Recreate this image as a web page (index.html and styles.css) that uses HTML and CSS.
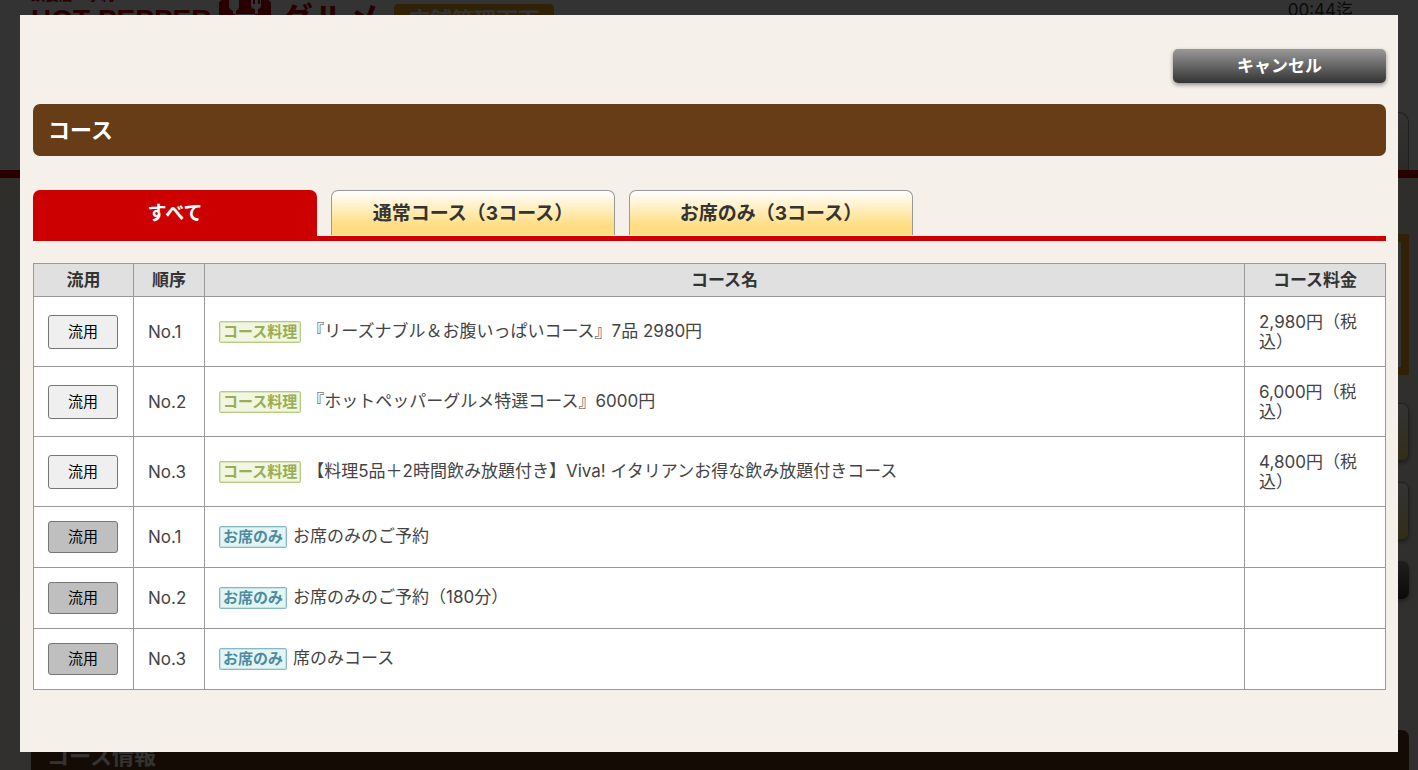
FILE: index.html
```html
<!DOCTYPE html>
<html lang="ja">
<head>
  <meta charset="UTF-8" />
  <title>コース</title>
  <link rel="stylesheet" href="styles.css">
</head>
<body>
  <div class="page" aria-hidden="true">
    <header class="page-header">
      <div>
        <div class="catch">飲食店・予約</div>
        <div class="brand">
          <span class="brand-en">HOT PEPPER</span>
          <svg class="brand-icon" width="52" height="44" viewBox="0 0 52 44">
            <rect width="52" height="44" rx="4" fill="#cc0000"/>
            <path d="M10 0v6c0 3 2 4 4 5v3h3v-3c2-1 3-3 3-5V0z" fill="#fff"/>
            <path d="M32 0v5c0 3 2 4 4 4v5h3V9c2 0 3-2 3-4V0h-1v4h-2V0h-3v4h-2V0z" fill="#fff"/>
            <path d="M16 14h20v2H16z" fill="#fff"/>
          </svg>
          <span class="brand-ja">グルメ</span>
          <span class="brand-badge">店舗管理画面</span>
        </div>
      </div>
      <div class="limit">00:44迄</div>
    </header>
    <div class="page-nav"><div class="page-tab"></div></div>
    <div class="page-main">
      <div class="notice"></div>
      <div class="page-btn"></div>
      <div class="page-btn"></div>
      <div class="page-btn dark"></div>
      <h2 class="page-title">コース情報</h2>
    </div>
  </div>

  <div class="overlay">
    <div class="modal" role="dialog" aria-labelledby="modal-title">
      <div class="modal-top">
        <button type="button" class="cancel">キャンセル</button>
      </div>
      <h1 class="title" id="modal-title">コース</h1>

      <div class="tabs" role="tablist">
        <button type="button" class="tab active" role="tab" aria-selected="true">すべて</button>
        <button type="button" class="tab" role="tab" aria-selected="false">通常コース（3コース）</button>
        <button type="button" class="tab" role="tab" aria-selected="false">お席のみ（3コース）</button>
      </div>

      <table class="courses">
        <thead>
          <tr>
            <th class="col-use">流用</th>
            <th class="col-no">順序</th>
            <th>コース名</th>
            <th class="col-price">コース料金</th>
          </tr>
        </thead>
        <tbody>
          <tr class="meal">
            <td><button type="button" class="use">流用</button></td>
            <td>No.1</td>
            <td><span class="label green">コース料理</span>『リーズナブル＆お腹いっぱいコース』7品 2980円</td>
            <td>2,980円（税込）</td>
          </tr>
          <tr class="meal">
            <td><button type="button" class="use">流用</button></td>
            <td>No.2</td>
            <td><span class="label green">コース料理</span>『ホットペッパーグルメ特選コース』6000円</td>
            <td>6,000円（税込）</td>
          </tr>
          <tr class="meal">
            <td><button type="button" class="use">流用</button></td>
            <td>No.3</td>
            <td><span class="label green">コース料理</span>【料理5品＋2時間飲み放題付き】Viva! イタリアンお得な飲み放題付きコース</td>
            <td>4,800円（税込）</td>
          </tr>
          <tr>
            <td><button type="button" class="use off" disabled>流用</button></td>
            <td>No.1</td>
            <td><span class="label blue">お席のみ</span>お席のみのご予約</td>
            <td></td>
          </tr>
          <tr>
            <td><button type="button" class="use off" disabled>流用</button></td>
            <td>No.2</td>
            <td><span class="label blue">お席のみ</span>お席のみのご予約（180分）</td>
            <td></td>
          </tr>
          <tr>
            <td><button type="button" class="use off" disabled>流用</button></td>
            <td>No.3</td>
            <td><span class="label blue">お席のみ</span>席のみコース</td>
            <td></td>
          </tr>
        </tbody>
      </table>
    </div>
  </div>
</body>
</html>
```
FILE: styles.css
```css
* {
  box-sizing: border-box;
}

body {
  margin: 0;
  height: 100vh;
  overflow: hidden;
  font-family: Inter, "Noto Sans CJK JP", sans-serif;
  font-size: 17px;
  line-height: 20px;
  color: #333;
  background-color: #fff;
}

button {
  font-family: inherit;
  padding: 0 0 3px;
}

/* page behind the modal */
.page {
  margin-top: -16px;
}

.page-header {
  display: flex;
  justify-content: space-between;
  height: 128px;
  padding: 0 65px 0 31px;
}

.catch {
  height: 16px;
  font-size: 14px;
  font-weight: bold;
  line-height: 22px;
  color: #cc0000;
}

.brand {
  display: flex;
  align-items: flex-start;
  color: #cc0000;
  font-weight: bold;
}

.brand-en {
  width: 188px;
  padding-top: 4px;
  font-family: "Liberation Sans", Arial, sans-serif;
  font-size: 28px;
  line-height: 32px;
  white-space: nowrap;
}

.brand-ja {
  width: 123px;
  padding: 4px 0 0 8px;
  font-size: 34px;
  line-height: 32px;
}

.brand-badge {
  margin-top: 4px;
  padding: 0 14px;
  border-radius: 4px;
  background-color: #f5a623;
  color: #fff;
  font-size: 22px;
  line-height: 32px;
}

.limit {
  padding-top: 16px;
}

.page-nav {
  display: flex;
  justify-content: flex-end;
  padding-right: 9px;
  border-bottom: 8px solid #cc0000;
}

.page-tab {
  width: 284px;
  height: 58px;
  border: 1px solid #999;
  border-bottom: none;
  border-radius: 10px 10px 0 0;
  background: linear-gradient(#fff, #ddd5c4);
}

.page-main {
  padding: 56px 9px 0 31px;
  background: linear-gradient(#e8e4d8, #f5f0e9);
}

.notice {
  height: 141px;
  margin-bottom: 28px;
  border: 8px solid #f5a623;
  background-color: #fff;
}

.page-btn {
  width: 284px;
  height: 58px;
  margin: 0 0 21px auto;
  border: 1px solid #999;
  border-radius: 7px;
  background: linear-gradient(#fff, #ffdd80);
  box-shadow: 0 2px 4px #888;
}

.page-btn.dark {
  height: 38px;
  margin-bottom: 131px;
  border: none;
  background: linear-gradient(#999, #333);
}

.page-title {
  margin: 0;
  padding: 0 16px;
  border-radius: 7px;
  background-color: #663d17;
  color: #fff;
  font-size: 22px;
  line-height: 52px;
}

/* modal */
.overlay {
  position: fixed;
  inset: 0;
  padding: 15px 20px;
  background-color: rgba(0, 0, 0, 0.8);
}

.modal {
  padding: 34px 12px 62px 13px;
  background-color: #f5f0e9;
}

.modal-top {
  display: flex;
  justify-content: flex-end;
  margin-bottom: 21px;
}

.cancel {
  width: 213px;
  height: 34px;
  border: none;
  border-radius: 5px;
  background: linear-gradient(#999, #333);
  box-shadow: 0 2px 4px rgba(0, 0, 0, 0.4);
  color: #fff;
  font-size: 17px;
  font-weight: bold;
}

.title {
  margin: 0 0 34px;
  padding: 0 15px;
  border-radius: 7px;
  background-color: #663d17;
  color: #fff;
  font-size: 22px;
  line-height: 52px;
}

.tabs {
  display: flex;
  gap: 14px;
  margin-bottom: 22px;
  border-bottom: 5px solid #cc0000;
}

.tab {
  width: 284px;
  height: 45px;
  margin-bottom: 1px;
  border: 1px solid #999;
  border-bottom: none;
  border-radius: 7px 7px 0 0;
  background: linear-gradient(#fff, #ffdd80 80%);
  color: #333;
  font-size: 19px;
  font-weight: bold;
}

.tab.active {
  height: 46px;
  margin-bottom: 0;
  border: none;
  background: #cc0000;
  color: #fff;
}

.courses {
  width: 100%;
  border-collapse: collapse;
  table-layout: fixed;
  background-color: #fff;
}

.courses th,
.courses td {
  border: 1px solid #999;
}

.courses th {
  padding: 6px 0;
  background-color: #e0e0e0;
}

.courses td {
  padding: 14px;
  color: #444;
}

.meal {
  height: 70px;
}

.col-use {
  width: 100px;
}

.col-no {
  width: 71px;
}

.col-price {
  width: 141px;
}

.use {
  display: block;
  width: 70px;
  height: 34px;
  border: 1px solid #767676;
  border-radius: 3px;
  background-color: #efefef;
  color: #000;
  font-size: 15px;
}

.use.off {
  height: 32px;
  background-color: #bfbfbf;
}

.label {
  display: inline-block;
  margin-right: 6px;
  padding: 0 3px;
  border: 1px solid;
  border-radius: 2px;
  font-size: 15px;
  font-weight: bold;
  line-height: 20px;
}

.label.green {
  border-color: #b9cc84;
  background-color: #f1f6e0;
  color: #98ad56;
  box-shadow: inset 0 0 0 1px #dbe6bd;
}

.label.blue {
  border-color: #86b9c4;
  background-color: #e2f5f3;
  color: #4f8ba0;
  box-shadow: inset 0 0 0 1px #c5e4e6;
}
```
